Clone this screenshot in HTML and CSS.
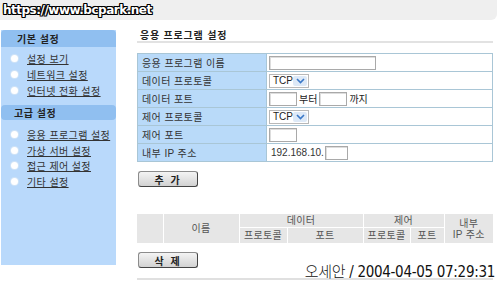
FILE: index.html
```html
<!DOCTYPE html>
<html lang="ko">
<head>
<meta charset="utf-8">
<title>응용 프로그램 설정</title>
<link rel="stylesheet" href="styles.css">
</head>
<body>
<div class="topbar"><span class="pagetitle">환경 설정</span></div>
<div class="watermark">https://www.bcpark.net</div>
<div class="layout">
  <nav class="sidebar">
    <div class="side-head">기본 설정</div>
    <ul class="side-list">
      <li><span class="dot"></span><a href="#">설정 보기</a></li>
      <li><span class="dot"></span><a href="#">네트워크 설정</a></li>
      <li><span class="dot"></span><a href="#">인터넷 전화 설정</a></li>
    </ul>
    <div class="side-head side-head2">고급 설정</div>
    <ul class="side-list side-list2">
      <li><span class="dot"></span><a href="#">응용 프로그램 설정</a></li>
      <li><span class="dot"></span><a href="#">가상 서버 설정</a></li>
      <li><span class="dot"></span><a href="#">접근 제어 설정</a></li>
      <li><span class="dot"></span><a href="#">기타 설정</a></li>
    </ul>
  </nav>
  <main class="content">
    <div class="title">응용 프로그램 설정</div>
    <table class="form">
      <tr><td class="lbl">응용 프로그램 이름</td><td class="val"><span class="inp w-name"></span></td></tr>
      <tr><td class="lbl">데이터 프로토콜</td><td class="val"><span class="sel">TCP<span class="arrow"><svg width="9" height="6" viewBox="0 0 9 6"><path d="M1 1 L4.5 4.5 L8 1" fill="none" stroke="#3a78c8" stroke-width="1.6"/></svg></span></span></td></tr>
      <tr><td class="lbl">데이터 포트</td><td class="val"><span class="inp w-port"></span><span class="txt">부터</span><span class="inp w-port"></span><span class="txt">까지</span></td></tr>
      <tr><td class="lbl">제어 프로토콜</td><td class="val"><span class="sel">TCP<span class="arrow"><svg width="9" height="6" viewBox="0 0 9 6"><path d="M1 1 L4.5 4.5 L8 1" fill="none" stroke="#3a78c8" stroke-width="1.6"/></svg></span></span></td></tr>
      <tr><td class="lbl">제어 포트</td><td class="val"><span class="inp w-port"></span></td></tr>
      <tr><td class="lbl">내부 IP 주소</td><td class="val"><span class="ip">192.168.10.</span><span class="inp w-ip"></span></td></tr>
    </table>
    <div class="btn btn-add">추 가</div>
    <table class="list">
      <colgroup>
        <col style="width:26px"><col style="width:76px"><col style="width:48px"><col style="width:76px"><col style="width:47px"><col style="width:34px"><col style="width:49px">
      </colgroup>
      <tr class="r1">
        <td rowspan="2"></td>
        <td rowspan="2">이름</td>
        <td colspan="2">데이터</td>
        <td colspan="2">제어</td>
        <td rowspan="2" class="ipcol">내부<br>IP 주소</td>
      </tr>
      <tr class="r2">
        <td>프로토콜</td><td>포트</td><td>프로토콜</td><td>포트</td>
      </tr>
    </table>
    <div class="btn btn-del">삭 제</div>
    <div class="rule-bottom"></div>
  </main>
</div>
<div class="stamp">오세안 / 2004-04-05 07:29:31</div>
</body>
</html>
```
FILE: styles.css
```css
* { box-sizing: border-box; }
html, body { margin: 0; padding: 0; background: #fff; }
body {
  width: 500px; height: 282px; overflow: hidden; position: relative;
  font-family: "Liberation Sans", "Noto Sans CJK KR", sans-serif;
  font-size: 10px; color: #333;
}
.topbar {
  height: 20px; width: 497px; background: #efefef;
  border-radius: 0 0 6px 0;
  padding-left: 80px;
  display: flex; align-items: center;
}
.pagetitle { font-size: 9px; color: #9a9a9a; font-weight: bold; }
.watermark {
  position: absolute; left: 3px; top: 3px;
  font-family: "DejaVu Sans", sans-serif; font-weight: bold; font-size: 12px;
  letter-spacing: -0.5px;
  color: #fff;
  text-shadow: 1px 0 0 #000, -1px 0 0 #000, 0 1px 0 #000, 0 -1px 0 #000, 1px 1px 0 #000, -1px -1px 0 #000, 1px -1px 0 #000, -1px 1px 0 #000;
}
.layout { display: flex; padding-top: 10px; }
.sidebar {
  width: 115px; height: 235px; background: #b9d9fb;
  margin-left: 1px;
}
.side-head {
  height: 17px; background: #90bff0; border-radius: 4px 4px 0 0;
  font-weight: bold; font-size: 10px; color: #222; letter-spacing: 0.5px;
  display: flex; align-items: center; padding-left: 16px;
}
.side-head2 { border-radius: 4px; margin-top: 7px; height: 15px; padding-left: 13px; }
.side-list { list-style: none; margin: 0; padding: 4px 0 0 0; }
.side-list2 { padding-top: 6px; }
.side-list li {
  height: 15.8px; display: flex; align-items: center; padding-left: 10px;
}
.dot {
  width: 7px; height: 7px; border-radius: 50%; background: #fff;
  box-shadow: 0 0 0 1px #cfe3f7; margin-right: 9px; flex: none;
}
.side-list a { color: #333; text-decoration: underline; font-size: 10px; letter-spacing: 0.4px; }
.content { margin-left: 21px; width: 356px; }
.title {
  font-weight: bold; font-size: 10px; color: #222; letter-spacing: 0.8px;
  padding-left: 3px; height: 13px; line-height: 11px;
  border-bottom: 2px solid #e2e2e2;
}
.form {
  margin-top: 10px; width: 356px; border-collapse: collapse;
}
.form td { height: 18px; padding: 0; border: 1px solid #a9c6d6; }
.form .lbl {
  width: 129px; background: #b9daf9; padding-left: 4px; font-size: 10px; color: #333; letter-spacing: 0.4px;
}
.form .val { padding-left: 2px; }
.val { white-space: nowrap; }
.val > * { vertical-align: middle; }
.inp {
  display: inline-block; height: 14px; border: 1px solid #a9a9a9; background: #fff;
  box-shadow: inset 1px 1px 0 #ddd;
}
.w-name { width: 107px; }
.w-port { width: 28px; }
.w-ip { width: 23px; }
.txt { display: inline-block; margin: 0 2px 0 2px; font-size: 10px; color: #222; }
.ip { display: inline-block; font-size: 10px; color: #333; margin: 0 1px 0 2px; }
.sel {
  display: inline-flex; align-items: center; height: 14px; width: 40px;
  border: 1px solid #b8b8b8; padding-left: 3px; font-size: 10px; color: #222; background: #fff;
}
.arrow {
  margin-left: auto; margin-right: 1px; width: 14px; height: 10px; background: #dde9f7;
  border-radius: 2px; display: flex; align-items: center; justify-content: center;
}
.btn {
  width: 60px; height: 16px; margin-left: 1px;
  background: linear-gradient(#f4f4f4, #d2d2d2);
  border: 1px solid #8c8c8c; border-right-color: #444; border-bottom-color: #444;
  border-radius: 3px;
  display: flex; align-items: center; justify-content: center;
  font-weight: bold; font-size: 10px; letter-spacing: 2px; color: #222;
}
.btn-add { margin-top: 9px; }
.list {
  margin-top: 26px; width: 356px; border-collapse: collapse; table-layout: fixed;
  background: #e6e6e6;
}
.list td {
  padding: 0; border: 1px solid #fff; text-align: center; color: #555; font-size: 10px;
  letter-spacing: 0.3px; line-height: 11px;
}
.list tr td:first-child { border-left: none; }
.list .r1 td { height: 14px; }
.list .r2 td { height: 16px; }
.list .ipcol { border-right: none; }
.btn-del { margin-top: 8px; }
.rule-bottom { margin-top: 10px; height: 2px; background: #e0e0e0; }
.stamp {
  position: absolute; right: 5px; top: 260px;
  font-family: "DejaVu Sans Condensed", "DejaVu Sans", "Noto Sans CJK KR", sans-serif; font-size: 15px; font-weight: 300;
  font-stretch: condensed;
  color: #111; letter-spacing: -0.3px;
  text-shadow: 0 0 2px #fff;
}
```
